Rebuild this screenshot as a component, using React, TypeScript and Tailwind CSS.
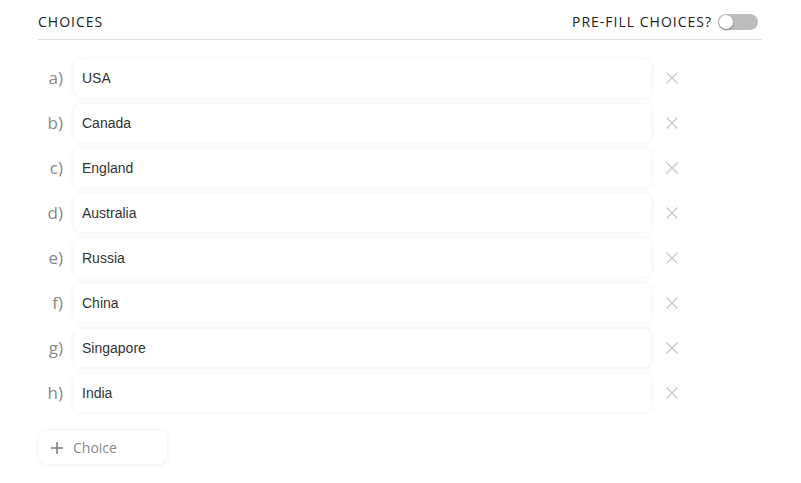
import React from "react";

const choices = ["USA", "Canada", "England", "Australia", "Russia", "China", "Singapore", "India"];
const letters = ["a", "b", "c", "d", "e", "f", "g", "h"];

export default function App() {
  return (
    <div className="w-[801px] h-[483px] bg-white" style={{ fontFamily: "'Open Sans', sans-serif" }}>
      <div className="ml-[38px] w-[724px]">
        <div className="h-[40px] flex items-center justify-between border-b border-[#dcdcdc] pt-[4px]">
          <span className="text-[14px] tracking-[1px] text-[#222]">CHOICES</span>
          <div className="flex items-center gap-[6px] mr-[4px]">
            <span className="text-[14px] tracking-[1px] text-[#222]">PRE-FILL CHOICES?</span>
            <div className="relative w-[40px] h-[16px] rounded-full bg-[#bdbdbd]">
              <div className="absolute left-[1px] top-[1px] w-[14px] h-[14px] rounded-full bg-white shadow-[0_1px_2px_rgba(0,0,0,0.4)]" />
            </div>
          </div>
        </div>
        <div className="mt-[19px] flex flex-col gap-[7px]">
          {choices.map((c, i) => (
            <div key={c} className="flex items-center h-[38px]">
              <div className="w-[36px] pr-[11px] text-right text-[17px] text-[#888]">{letters[i]})</div>
              <div
                className="w-[577px] h-[38px] rounded-[7px] bg-white flex items-center pl-[8px] text-[14px] text-[#333] shadow-[0_0_6px_rgba(0,0,0,0.07)]"
                style={{ fontFamily: "'Liberation Sans', Arial, sans-serif" }}
              >
                {c}
              </div>
              <svg className="ml-[15px]" width="12" height="12" viewBox="0 0 12 12">
                <path d="M0.5 0.5L11.5 11.5M11.5 0.5L0.5 11.5" stroke="#c8c8c8" strokeWidth="1.3" />
              </svg>
            </div>
          ))}
        </div>
        <div className="mt-[19px] ml-[1px] w-[128px] h-[33px] rounded-[7px] bg-white shadow-[0_0_6px_rgba(0,0,0,0.08)] flex items-center pl-[12px]">
          <svg width="12" height="12" viewBox="0 0 12 12">
            <path d="M6 0V12M0 6H12" stroke="#777" strokeWidth="1.5" />
          </svg>
          <span className="ml-[10px] text-[14px] text-[#888]">Choice</span>
        </div>
      </div>
    </div>
  );
}
